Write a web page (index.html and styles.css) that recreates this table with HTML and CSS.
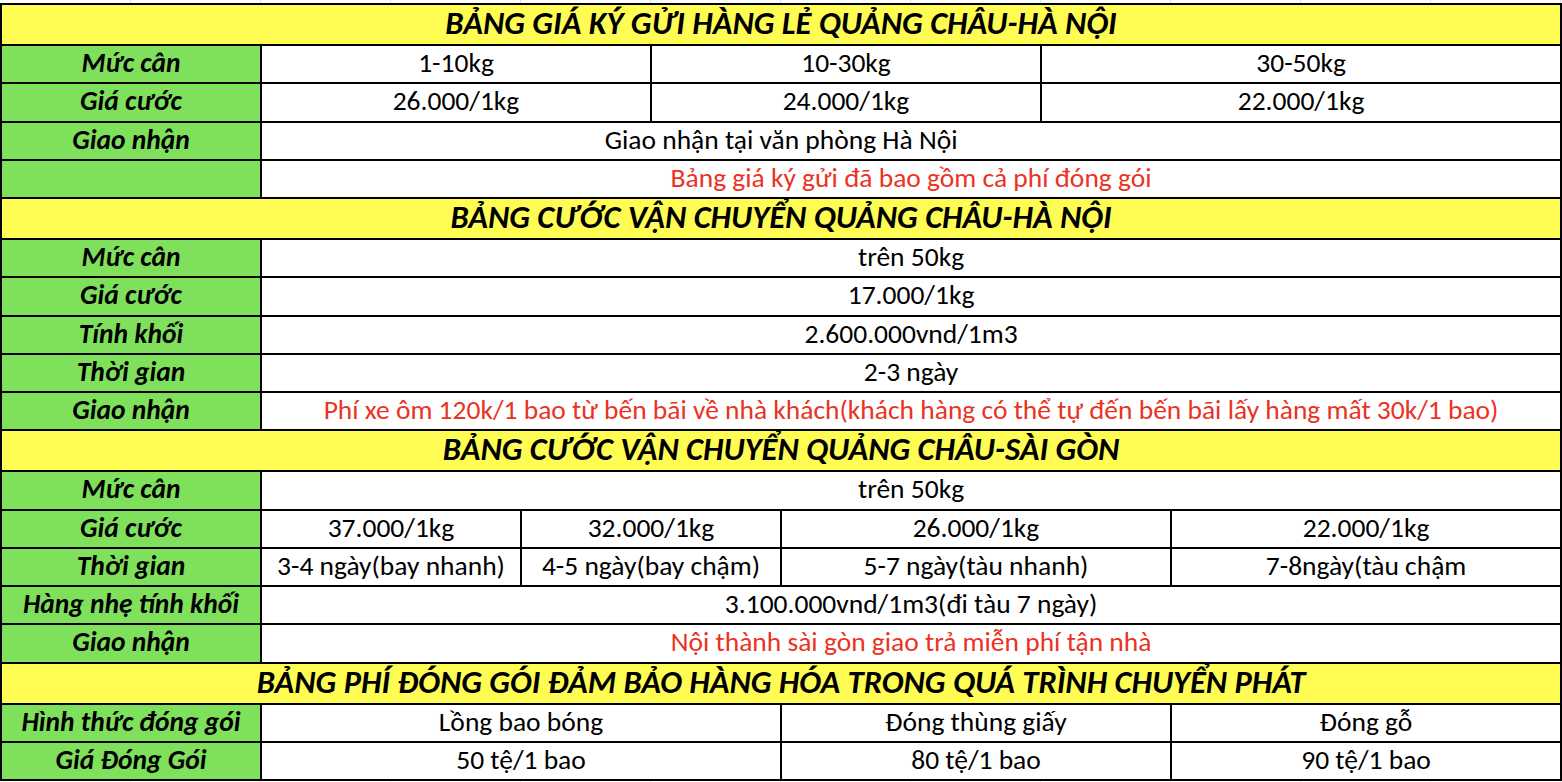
FILE: index.html
```html
<!DOCTYPE html>
<html lang="vi">
<head>
<meta charset="utf-8">
<title>Bảng giá</title>
<link rel="stylesheet" href="styles.css">
</head>
<body>
<div class="grid-strip top">
  <span></span><span></span><span></span><span></span><span></span><span></span><span></span><span></span><span></span><span></span><span></span><span></span>
</div>
<table class="price">
  <colgroup>
    <col><col><col><col><col><col><col><col><col><col><col><col>
  </colgroup>
  <tr class="title"><td colspan="12">BẢNG GIÁ KÝ GỬI HÀNG LẺ QUẢNG CHÂU-HÀ NỘI</td></tr>
  <tr><th colspan="2">Mức cân</th><td colspan="3">1-10kg</td><td colspan="3">10-30kg</td><td colspan="4">30-50kg</td></tr>
  <tr><th colspan="2">Giá cước</th><td colspan="3">26.000/1kg</td><td colspan="3">24.000/1kg</td><td colspan="4">22.000/1kg</td></tr>
  <tr><th colspan="2">Giao nhận</th><td colspan="10" class="span8">Giao nhận tại văn phòng Hà Nội</td></tr>
  <tr><th colspan="2"></th><td colspan="10" class="red">Bảng giá ký gửi đã bao gồm cả phí đóng gói</td></tr>

  <tr class="title"><td colspan="12">BẢNG CƯỚC VẬN CHUYỂN QUẢNG CHÂU-HÀ NỘI</td></tr>
  <tr><th colspan="2">Mức cân</th><td colspan="10">trên 50kg</td></tr>
  <tr><th colspan="2">Giá cước</th><td colspan="10">17.000/1kg</td></tr>
  <tr><th colspan="2">Tính khối</th><td colspan="10">2.600.000vnd/1m3</td></tr>
  <tr><th colspan="2">Thời gian</th><td colspan="10">2-3 ngày</td></tr>
  <tr><th colspan="2">Giao nhận</th><td colspan="10" class="red">Phí xe ôm 120k/1 bao từ bến bãi về nhà khách(khách hàng có thể tự đến bến bãi lấy hàng mất 30k/1 bao)</td></tr>

  <tr class="title"><td colspan="12">BẢNG CƯỚC VẬN CHUYỂN QUẢNG CHÂU-SÀI GÒN</td></tr>
  <tr><th colspan="2">Mức cân</th><td colspan="10">trên 50kg</td></tr>
  <tr><th colspan="2">Giá cước</th><td colspan="2">37.000/1kg</td><td colspan="2">32.000/1kg</td><td colspan="3">26.000/1kg</td><td colspan="3">22.000/1kg</td></tr>
  <tr><th colspan="2">Thời gian</th><td colspan="2">3-4 ngày(bay nhanh)</td><td colspan="2">4-5 ngày(bay chậm)</td><td colspan="3">5-7 ngày(tàu nhanh)</td><td colspan="3">7-8ngày(tàu chậm</td></tr>
  <tr><th colspan="2">Hàng nhẹ tính khối</th><td colspan="10">3.100.000vnd/1m3(đi tàu 7 ngày)</td></tr>
  <tr><th colspan="2">Giao nhận</th><td colspan="10" class="red">Nội thành sài gòn giao trả miễn phí tận nhà</td></tr>

  <tr class="title"><td colspan="12">BẢNG PHÍ ĐÓNG GÓI ĐẢM BẢO HÀNG HÓA TRONG QUÁ TRÌNH CHUYỂN PHÁT</td></tr>
  <tr><th colspan="2">Hình thức đóng gói</th><td colspan="4">Lồng bao bóng</td><td colspan="3">Đóng thùng giấy</td><td colspan="3">Đóng gỗ</td></tr>
  <tr><th colspan="2">Giá Đóng Gói</th><td colspan="4">50 tệ/1 bao</td><td colspan="3">80 tệ/1 bao</td><td colspan="3">90 tệ/1 bao</td></tr>
</table>
<div class="grid-strip bottom">
  <span></span><span></span><span></span><span></span><span></span><span></span><span></span><span></span><span></span><span></span><span></span><span></span>
</div>
</body>
</html>
```
FILE: styles.css
```css
html, body {
  margin: 0;
  padding: 0;
  background: #ffffff;
}
body {
  font-family: Carlito, Lato, "Liberation Sans", sans-serif;
  color: #000;
  width: 1562px;
  overflow: hidden;
}
.grid-strip {
  display: grid;
  grid-template-columns: repeat(12, 130px);
  margin-left: 1px;
}
.grid-strip span {
  border-right: 1px solid #e0e0e0;
}
.grid-strip.top { height: 3px; }
.grid-strip.bottom { height: 3px; }

.price {
  border-collapse: collapse;
  table-layout: fixed;
  width: 1562px;
}
.price col { width: 130px; }
.price td, .price th {
  border: 2px solid #000;
  padding: 0 0 2px;
  height: 34.25px;
  text-align: center;
  vertical-align: middle;
  font-size: 27.5px;
  line-height: 30px;
  white-space: nowrap;
  overflow: hidden;
}
.price th {
  background: #7fe05c;
  font-weight: 700;
  font-style: italic;
  font-size: 27.5px;
}
.price td { background: #ffffff; font-weight: 400; }
.price td.red { color: #ea3323; }
.price td.span8 { padding-right: 260px; }
.price .title td {
  background: #fffd54;
  height: 36px;
  padding: 0 0 3px;
  font-size: 32.5px;
  font-weight: 700;
  font-style: italic;
  line-height: 34px;
}
```
